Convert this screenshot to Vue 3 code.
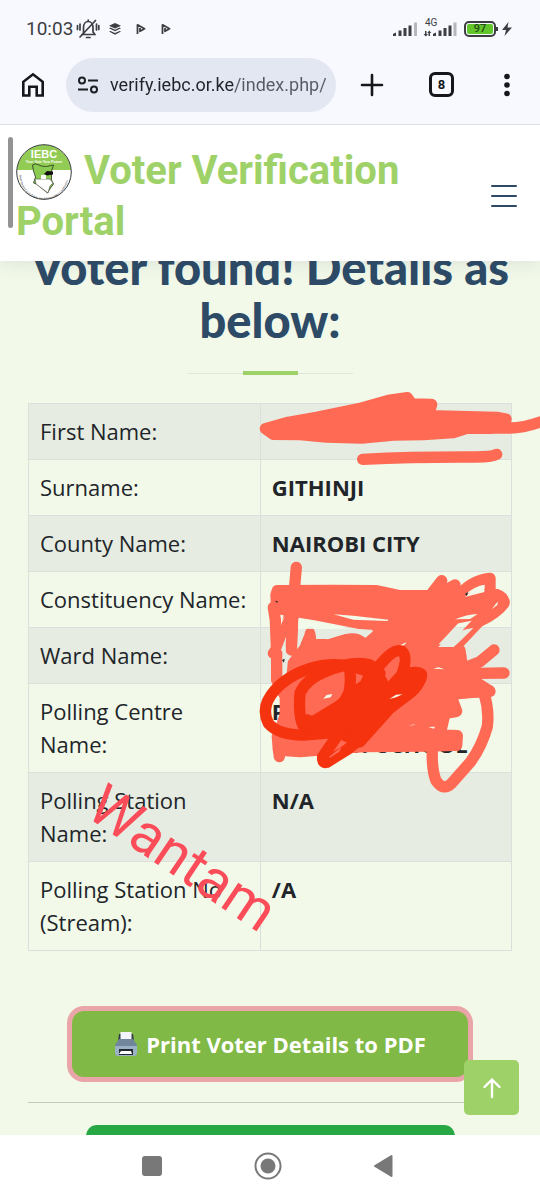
<script setup>
import { ref } from 'vue'

const address = ref('verify.iebc.or.ke/index.php/')

const rows = [
  { label: 'First Name:', value: '' },
  { label: 'Surname:', value: 'GITHINJI' },
  { label: 'County Name:', value: 'NAIROBI CITY' },
  { label: 'Constituency Name:', value: '' },
  { label: 'Ward Name:', value: '' },
  { label: 'Polling Centre Name:', value: 'P\nPRIMARY SCHOOL' },
  { label: 'Polling Station Name:', value: 'N/A' },
  { label: 'Polling Station No (Stream):', value: '/A' }
]
</script>

<template>
  <div class="screen">
    <div class="status">
      <span class="clock">10:03</span>
      <svg class="bell" viewBox="0 0 24 22" width="24" height="22" fill="none" stroke="#3c3e42" stroke-width="1.7" stroke-linecap="round">
        <path d="M6 16.5h12.500M7.500 16V9.500c0-3.500 2-6 4.700-6s4.800 2.500 4.800 6V14l2 2.500M10.500 19.500h3.500M12.200 2v1.500" />
        <path d="M4 19 19.500 2.500M1.500 7.500v4M4 6v6M20.500 6v6M22.800 7.500v4" />
      </svg>
      <svg class="layers" viewBox="0 0 14 14" width="14" height="14" fill="#3c3e42">
        <path d="M7 1 13 3.700 7 6.400 1 3.700zM1 6.200l1.500-.6L7 7.700l4.500-2.100 1.500.6L7 9.200zM1 9.600l1.500-.6L7 11l4.500-2 1.500.6L7 12.800z" />
      </svg>
      <svg v-for="n in 2" :key="n" class="play" viewBox="0 0 10 12" width="10" height="12" fill="none" stroke="#3c3e42" stroke-width="1.800" stroke-linejoin="round">
        <path d="M1.500 11V1.800L8.500 5.800 4 8.300V5" />
      </svg>
      <div class="radio">
        <svg viewBox="0 0 25 16" width="25" height="16" fill="#3c3e42">
          <path d="M0 13q1-1 3-1.500V15H0zM5.500 9.500h3V15h-3zM10.500 7h3v8h-3zM15.500 4.500h3V15h-3z" />
          <path d="M21 1.500h3V15h-3z" fill="#b5b7bd" />
        </svg>
        <div class="mobile">
          <span class="network">4G</span>
          <svg viewBox="0 0 34 16" width="34" height="16" fill="#3c3e42">
            <path d="M2 10h1.500v3H5L2.800 15.500.5 13H2zM5.500 15v-3H4.300L6.300 9.500 8.300 12H7v3z" />
            <path d="M10 13q1-1 3-1.500V15h-3zM15.500 9.500h3V15h-3zM20.500 7h3v8h-3zM25.500 4.500h3V15h-3z" />
            <path d="M30.500 1.500h3V15h-3z" fill="#b5b7bd" />
          </svg>
        </div>
        <div class="battery"><span>97</span></div>
        <svg viewBox="0 0 10 14" width="10" height="14" fill="#3c3e42"><path d="M6.500 0 0 8h4L2.500 14 10 5.500H5.500z" /></svg>
      </div>
    </div>

    <div class="toolbar">
      <button class="icon-button" aria-label="Home">
        <svg viewBox="0 0 24 26" width="24" height="26" fill="none" stroke="#15171a" stroke-width="2.600">
          <path d="M2.300 23.500V9.800L12 2.300l9.700 7.500v13.700h-6v-8.700H8.300v8.700z" />
        </svg>
      </button>
      <div class="omnibox">
        <svg viewBox="0 0 22 18" width="22" height="18" fill="none" stroke="#1c1f24" stroke-width="2">
          <circle cx="5" cy="4.500" r="3" /><path d="M11 4.500h10M1 13.500h10" /><circle cx="17" cy="13.500" r="3" />
        </svg>
        <input v-model="address" aria-label="Address" type="text" />
      </div>
      <button class="icon-button" aria-label="New tab">
        <svg viewBox="0 0 24 24" width="24" height="24" stroke="#15171a" stroke-width="2.600" stroke-linecap="round"><path d="M12 2v20M2 12h20" /></svg>
      </button>
      <button class="tabs" aria-label="8 open tabs">8</button>
      <button class="icon-button menu-dots" aria-label="More">
        <svg viewBox="0 0 6 24" width="6" height="24" fill="#15171a"><circle cx="3" cy="3.500" r="2.800" /><circle cx="3" cy="12" r="2.800" /><circle cx="3" cy="20.500" r="2.800" /></svg>
      </button>
    </div>

    <div class="page">
      <header class="site-header">
        <a class="brand" href="#">
          <svg class="logo" viewBox="0 0 56 56" width="56" height="56">
            <defs>
              <clipPath id="disc"><circle cx="28" cy="28" r="27" /></clipPath>
              <path id="rim" d="M3.500 31a24.500 24.500 0 0 0 49 0" />
            </defs>
            <g clip-path="url(#disc)">
              <path d="M0 0h56v56H0z" fill="#fff" />
              <path d="M0 0h56v26H0z" fill="#93cc55" />
            </g>
            <path d="M16.500 21q3-2 5-.5 5 2.500 9 2l7-1.500-2 6v9l2 4-3 4-3 5-11-9-3-1 2-6-2-6z" fill="#8bcb52" stroke="#26331f" stroke-width=".8" />
            <path d="M19 35h15l3 4-3 3-2 7-4-3-8-6z" fill="#fff" stroke="#59634f" stroke-width=".7" />
            <path d="M25 31h5v4h-5z" fill="#fff" />
            <path d="m28 30 3-3 6 .5v3l-6 1z" fill="#111" />
            <text x="28" y="14" text-anchor="middle" font-size="11" font-weight="700" fill="#fff">IEBC</text>
            <text x="28" y="18.500" text-anchor="middle" font-size="3.500" font-weight="700" fill="#fff">Your Vote Your Future</text>
            <text font-size="2.400" fill="#222"><textPath href="#rim">INDEPENDENT ELECTORAL AND BOUNDARIES COMMISSION</textPath></text>
            <circle cx="28" cy="28" r="27.300" fill="none" stroke="#343a36" />
          </svg>
          Voter Verification Portal
        </a>
        <button class="burger" aria-label="Toggle navigation">
          <svg viewBox="0 0 28 24" width="28" height="24" stroke="#2d4a66" stroke-width="2" stroke-linecap="round"><path d="M2 2h24M2 12h24M2 22h24" /></svg>
        </button>
      </header>

      <main class="content">
        <h2>Voter found! Details as below:</h2>
        <div class="divider"></div>

        <div class="details">
          <table>
            <tbody>
              <tr v-for="row in rows" :key="row.label">
                <th scope="row">{{ row.label }}</th>
                <td>{{ row.value }}</td>
              </tr>
            </tbody>
          </table>

          <svg class="marks" viewBox="28 403 484 547" preserveAspectRatio="xMinYMin meet" fill="none" stroke-linecap="round" stroke-linejoin="round">
            <g transform="translate(250 380) scale(.33333)" stroke="#ff6a55" stroke-width="34">
              <path fill="#ff6a55" d="M46 146 115 127 200 112 335 84 420 60 472 53 485 72 545 73 535 107 740 112 768 117 765 132 720 145 650 145 610 158 520 164 430 165 335 174 230 171 150 164 70 163z" />
              <path d="M660 144h120q40 0 90-18M338 238q160-8 340-7 50 0 62-8" />
            </g>
            <g transform="translate(250 550) scale(.33333)">
              <g stroke="#ff6a55" stroke-width="34">
                <path d="M139 52 133 120 124 300" />
                <path d="M70 172 76 210 80 310 80 390 106 440 106 500 82 560 88 620" />
                <path d="M70 310 100 270 120 190" />
                <path fill="#ff6a55" d="M78 135 82 122 250 121 380 122 450 137 540 137 575 92 560 135 615 105 595 150 640 160 740 134 762 155 740 180 690 190 610 205 530 270 490 300 450 290 410 225 330 220 200 195 80 175z" />
                <path d="M615 150Q660 90 720 85l0 60M740 134Q762 140 762 160 740 190 685 216L620 285M540 285 620 200" />
                <path fill="#ff6a55" d="M182 248 165 295 130 340 120 450 85 560 85 600 150 605 340 590 530 588 620 586 622 557 570 555 585 490 620 484 600 430 720 424 660 385 640 370 630 302 560 300 520 250 400 230 350 285 310 262 240 283 180 285z" />
                <path d="M600 370 690 335 732 300M600 395 680 370 762 369M610 432 718 422" />
                <path d="M702 430Q718 480 712 530 695 590 662 635L605 700Q580 725 558 692 545 660 547 600" />
              </g>
              <g fill="#f2fae9">
                <path d="M250 193 310 197 415 209 413 213 310 209z" />
                <path d="M615 208Q650 193 683 192L660 207zM725 178Q740 157 744 155L742 165z" />
                <path d="M440 291 470 276 460 289zM550 356 565 352 584 358zM476 528 495 522 492 525zM535 531 555 530 552 536z" />
                <path d="M92 220 105 197 98 214zM645 134Q675 108 704 104L703 117 670 123z" />
                <path d="M145 208 200 218 310 237H145z" />
              </g>
              <g fill="#e6ece1">
                <path d="M565 291Q610 240 670 234 635 270 611 291zM145 237H310L370 243 348 262Q310 235 232 268L198 260Q195 230 179 231 165 233 163 254L145 290zM93 300 108 260 106 315z" />
              </g>
              <path d="m645 132 9-6-3 12zM75 152l8 2-1 6zM96 330l8-4-2 12z" fill="#212529" />
              <g stroke="#f5330f" stroke-width="34">
                <path d="M365 370Q290 335 215 347 125 365 75 420 30 470 55 520 85 555 160 555L250 548" />
                <path d="M300 365Q305 410 290 450L160 528Q145 500 150 430 165 390 225 365 310 330 360 345L390 370" />
                <path fill="#f5330f" d="M160 515 190 505 290 440 345 405 370 350 410 420 500 370 510 380Q510 410 465 440L420 475 330 575 245 540z" />
                <path d="M345 410 390 345Q430 295 455 303 475 320 455 375L405 430M455 375Q500 360 514 372 520 390 480 425L420 470" />
                <path d="M270 545 218 620Q216 640 230 637L290 600 340 560" />
              </g>
              <path d="M175 490Q172 465 210 425 245 410 276 420 280 440 255 455L190 495Q178 500 175 490zM408 372Q405 350 445 318 455 325 440 360L420 368zM237 620 275 590 268 605 240 623z" fill="#ff6a55" />
              <path d="M220 446 230 435 247 432 242 442zM418 447 438 434 458 433 438 442z" fill="#f2fae9" />
            </g>
            <text transform="translate(84 815) rotate(34)" font-size="57" fill="#fb4d59">Wantam</text>
          </svg>
        </div>

        <button class="print">
          <svg viewBox="0 0 24 26" width="24" height="26">
            <path d="M5 3h14l1 7H4z" fill="#333c43" />
            <path d="M6.500 1h11v8h-11z" fill="#f4f5fa" />
            <path d="M5 8h14l4 6v9l-2 2H3l-2-2v-9z" fill="#71869a" />
            <path d="M1 15h22v8l-2 2H3l-2-2z" fill="#9ab1c6" />
            <path d="M5 18h14v6H5z" fill="#222a30" />
            <path d="M7 20h10l1 3H5z" fill="#fff" />
          </svg>
          Print Voter Details to PDF
        </button>
        <hr />
        <button class="next" aria-label="Continue"></button>
      </main>

      <div class="scroll-thumb"></div>
      <a class="to-top" href="#" aria-label="Back to top">
        <svg viewBox="0 0 20 22" width="20" height="22" fill="none" stroke="#fff" stroke-width="2.400" stroke-linecap="round" stroke-linejoin="round"><path d="M10 20V2.500M2.500 10 10 2.500l7.500 7.500" /></svg>
      </a>
    </div>

    <nav class="system-nav" aria-label="System">
      <button aria-label="Recent apps"><svg viewBox="0 0 28 28" width="28" height="28"><rect x="4" y="4" width="20" height="20" rx="3" fill="#787878" /></svg></button>
      <button aria-label="Home screen"><svg viewBox="0 0 28 28" width="28" height="28"><circle cx="14" cy="14" r="12.500" fill="none" stroke="#787878" stroke-width="2" /><circle cx="14" cy="14" r="7.500" fill="#787878" /></svg></button>
      <button aria-label="Back"><svg viewBox="0 0 28 28" width="28" height="28"><path d="M5 14 21.500 4v20z" fill="#787878" stroke="#787878" stroke-width="2" stroke-linejoin="round" /></svg></button>
    </nav>
  </div>
</template>

<style>
body { margin: 0; }
</style>

<style scoped>
* { box-sizing: border-box; }
button { border: 0; padding: 0; background: none; font: inherit; cursor: pointer; }
svg { display: block; flex: none; }
.screen {
  display: flex;
  flex-direction: column;
  height: 100vh;
  overflow: hidden;
  background: #f8f9fe;
  font-family: Roboto, sans-serif;
}
.status {
  display: flex;
  align-items: center;
  height: 45px;
  margin-top: 6px;
  padding: 0 28px 0 26px;
  color: #3c3e42;
}
.clock { font-size: 19px; margin-right: 3px; }
.bell { margin-right: 8px; }
.layers { margin-right: 14px; }
.play { margin-right: 15px; }
.radio { display: flex; align-items: center; margin-left: auto; gap: 5px; }
.mobile { position: relative; margin-right: 2px; }
.network { position: absolute; left: 2px; top: -3px; font-size: 10px; line-height: 10px; }
.battery {
  position: relative;
  width: 32px;
  height: 16px;
  padding: 1px;
  border: 2px solid #3c3e42;
  border-radius: 5px;
  margin-right: 1px;
}
.battery span {
  display: block;
  height: 10px;
  border-radius: 2px;
  background: #61c52b;
  color: #264b16;
  font-size: 11px;
  font-weight: 500;
  line-height: 10px;
  text-align: center;
}
.battery::after {
  content: '';
  position: absolute;
  right: -4px;
  top: 4px;
  width: 2px;
  height: 4px;
  background: #3c3e42;
}
.toolbar {
  display: flex;
  align-items: center;
  height: 74px;
  padding: 0 30px 6px 21px;
  border-bottom: 1px solid #dedfe4;
}
.omnibox {
  display: flex;
  align-items: center;
  flex: 1;
  min-width: 0;
  height: 54px;
  margin: 0 24px 0 21px;
  padding: 0 10px 0 11px;
  border-radius: 27px;
  background: #e3e7f1;
}
.omnibox input {
  flex: 1;
  min-width: 0;
  height: 30px;
  margin-left: 11px;
  padding: 0;
  border: 0;
  outline: 0;
  font: 18px Roboto, sans-serif;
  color: transparent;
  background: linear-gradient(to right, #202329 124px, #555b65 124px);
  background-clip: text;
}
.tabs {
  width: 25px;
  height: 25px;
  margin: 0 61px 0 45px;
  border: 3px solid #15171a;
  border-radius: 6px;
  color: #15171a;
  font-size: 13px;
  font-weight: 700;
  line-height: 19px;
}
.menu-dots { margin-left: -11px; }
.page {
  position: relative;
  flex: 1;
  min-height: 0;
  overflow: hidden;
  background: #f2f9e9;
}
.site-header {
  position: relative;
  z-index: 2;
  display: flex;
  align-items: center;
  justify-content: space-between;
  padding: 20px 22px 14px 16px;
  background: #fff;
  box-shadow: 0 0 20px rgba(45, 74, 102, 0.15);
}
.brand {
  max-width: 440px;
  color: #9fd169;
  font-size: 40px;
  font-weight: 700;
  line-height: 51px;
  text-decoration: none;
}
.logo {
  display: inline-block;
  margin: -20px 2px -16px 0;
  vertical-align: baseline;
  font-family: "Liberation Sans", sans-serif;
  font-weight: 400;
}
.content {
  display: flex;
  flex-direction: column;
  align-items: center;
  margin-top: -20px;
  padding: 0 28px;
  font-family: "Open Sans", sans-serif;
}
h2 {
  margin: 0 -6px;
  color: #2d4a66;
  font-family: Lato, sans-serif;
  font-size: 47px;
  font-weight: 900;
  line-height: 53px;
  text-align: center;
}
.divider {
  display: flex;
  align-items: center;
  justify-content: center;
  width: 165px;
  height: 4px;
  margin: 24px 0 28px;
  background: linear-gradient(#dfe5dc, #dfe5dc) center / 100% 1px no-repeat;
}
.divider::before { content: ''; width: 55px; height: 4px; background: #9fd169; }
.details { position: relative; width: 100%; }
table {
  width: 100%;
  border-collapse: collapse;
  table-layout: fixed;
  color: #212529;
  font-size: 22px;
  line-height: 33px;
}
th, td {
  padding: 11px;
  border: 1px solid #dae0db;
  text-align: left;
  vertical-align: top;
}
th { width: 48%; font-weight: 400; }
td { font-weight: 700; white-space: pre-line; }
tr:nth-child(odd) { background: #e6ece1; }
.marks {
  position: absolute;
  inset: 0;
  width: 100%;
  height: 100%;
  overflow: visible;
  pointer-events: none;
  font-family: Roboto, sans-serif;
}
.print {
  display: flex;
  align-items: center;
  justify-content: center;
  gap: 8px;
  height: 76px;
  margin-top: 55px;
  padding: 0 42px;
  border: 5px solid #eaa5a8;
  border-radius: 17px;
  background: #80b946;
  color: #fff;
  font-size: 22px;
  font-weight: 700;
}
hr { width: 100%; margin: 20px 0 22px; border: 0; border-top: 1px solid #c4cabf; }
.next { width: 369px; height: 66px; border-radius: 11px; background: #28a745; }
.scroll-thumb {
  position: absolute;
  z-index: 3;
  left: 8px;
  top: 12px;
  width: 5px;
  height: 91px;
  border-radius: 3px;
  background: #939393;
}
.to-top {
  position: absolute;
  right: 21px;
  bottom: 20px;
  display: grid;
  place-items: center;
  width: 55px;
  height: 55px;
  border-radius: 5px;
  background: #9fd169;
}
.system-nav {
  display: flex;
  align-items: center;
  justify-content: center;
  gap: 88px;
  height: 65px;
  padding: 0 4px 3px 0;
  background: #fff;
}
</style>
